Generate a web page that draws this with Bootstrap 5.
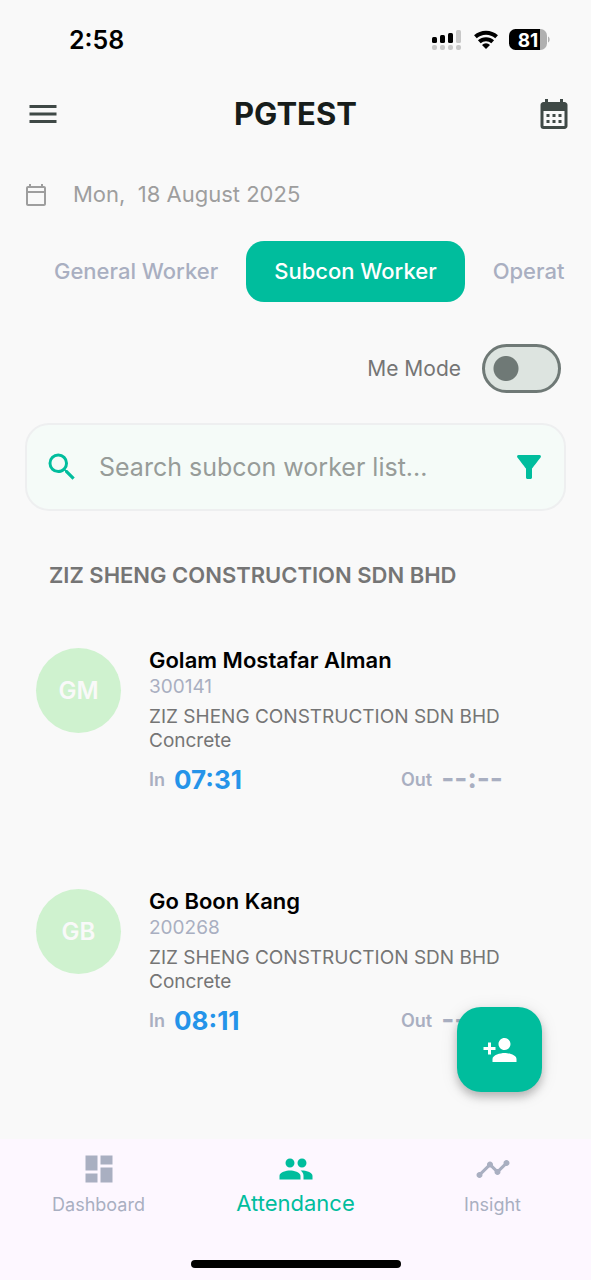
<!DOCTYPE html>
<html lang="en">
<head>
<meta charset="utf-8">
<meta name="viewport" content="width=device-width, initial-scale=1">
<title>PGTEST Attendance</title>
<link href="https://cdn.jsdelivr.net/npm/bootstrap@5.3.0/dist/css/bootstrap.min.css" rel="stylesheet">
<style>
  :root { --brand: #00bd9d; --muted: #a9afc1; --gray: #757575; }
  body { font-family: Inter, "Liberation Sans", sans-serif; background: #f9f9f9; color: #171d1b; }
  svg { display: block; fill: currentColor; flex: none; }
  .ico { width: 36px; height: 36px; }
  .plain { background: none; border: 0; padding: 0; color: #3f4946; }
  .status { height: 80px; padding: 0 40px 0 69px; color: #000; }
  .clock { font-size: 25px; font-weight: 600; line-height: 30px; }
  .topbar { height: 68px; padding: 0 19px; }
  .topbar .plain { width: 42px; }
  .topbar h1 { font-size: 31px; font-weight: 700; line-height: 36px; }
  .gutter { margin-left: 25px; margin-right: 25px; }
  .date { height: 93px; color: #9e9e9e; font-size: 22px; white-space: pre; }
  .tabs { flex-wrap: nowrap; overflow: hidden; height: 61px; padding-left: 1px; }
  .tabs .nav-link { font-size: 22px; font-weight: 500; line-height: 31px; padding: 15px 28px; color: var(--muted); border-radius: 18px; white-space: nowrap; }
  .tabs .nav-link:last-child { padding-right: 0; }
  .tabs .nav-link.active { background: var(--brand); color: #fff; }
  .me { margin-top: 42px; margin-right: 30px; gap: 21px; color: var(--gray); font-size: 21px; }
  .me .form-check-input { width: 79px; height: 49px; margin: 0; float: none; border: 3px solid #6f7976; border-radius: 25px; background: #dde4e0 radial-gradient(circle at 21px 50%, #6f7976 12px, transparent 13px); }
  .me .form-switch { padding: 0; min-height: 0; }
  .search { margin-top: 30px; height: 88px; padding: 0 17px; border: 2px solid #eeeff0; border-radius: 24px; background: #f5fbf8; color: var(--brand); }
  .search input { border: 0; background: none !important; box-shadow: none !important; font-size: 25px; line-height: 30px; padding: 0 18px 0 19px; }
  .search input::placeholder { color: #979c99; opacity: 1; }
  .search .plain { color: var(--brand); }
  .group { font-size: 22px; font-weight: 600; line-height: 30px; color: var(--gray); margin: 49px 25px 0 49px; }
  .person { margin: 0 36px 91px; gap: 28px; }
  .people { padding-top: 55px; }
  .avatar { width: 85px; height: 85px; margin-top: 3px; border-radius: 50%; background: #cff2cf; color: #f9f9f9; font-size: 24px; font-weight: 600; flex: none; }
  .person h3 { font-size: 22px; font-weight: 600; line-height: 30px; color: #000; margin: 0; }
  .pid { font-size: 19px; line-height: 24px; color: var(--muted); }
  .job { font-size: 19px; line-height: 24px; color: var(--gray); margin-top: 6px; }
  .times { margin-top: 12px; line-height: 30px; font-weight: 600; color: var(--muted); }
  .times small { font-size: 18px; }
  .times span { font-size: 26px; font-weight: 700; margin-left: 9px; }
  .times .in { color: #2594e9; }
  .times .out { width: 154px; flex: none; white-space: nowrap; }
  .times .out span { font-size: 28px; line-height: 26px; padding-bottom: 4px; }
  .bottombar { background: #fdf7ff; height: 141px; }
  .bottombar .nav-link { color: var(--muted); padding: 12px 0 0; font-size: 18px; line-height: 24px; gap: 6px; }
  .bottombar .nav-link.active { color: var(--brand); font-size: 22px; gap: 4px; }
  .home { width: 210px; height: 8px; border-radius: 4px; background: #000; margin-bottom: 12px; }
  .fab { position: absolute; right: 49px; bottom: 100%; width: 85px; height: 85px; margin-bottom: 47px; border: 0; border-radius: 24px; background: var(--brand); color: #fff; box-shadow: 0 5px 8px rgba(0,0,0,.22), 0 3px 18px rgba(0,0,0,.1); }
</style>
<script src="https://cdn.jsdelivr.net/npm/bootstrap@5.3.0/dist/js/bootstrap.bundle.min.js"></script>
</head>
<body>
<div class="d-flex flex-column min-vh-100">
  <div class="status d-flex align-items-center justify-content-between">
    <div class="clock">2:58</div>
    <div class="d-flex align-items-center gap-2">
      <svg width="34" height="24" viewBox="0 0 34 24" role="img" aria-label="Signal">
        <rect x="0" y="9" width="5" height="6" rx="1.500"/><rect x="8" y="7" width="5" height="8" rx="1.500"/><rect x="16" y="5" width="5" height="10" rx="1.500"/>
        <g fill="#c8c8c8"><rect x="24" y="2" width="5" height="13" rx="1.500"/><rect x="0" y="17" width="5" height="5" rx="2"/><rect x="8" y="17" width="5" height="5" rx="2"/><rect x="16" y="17" width="5" height="5" rx="2"/><rect x="24" y="17" width="5" height="5" rx="2"/></g>
      </svg>
      <svg width="26" height="20" viewBox="1 0 26 20" role="img" aria-label="Wi-Fi">
        <g fill="none" stroke="#000" stroke-width="4"><path d="M2.400 6.800a15.800 15.800 0 0 1 21.200 0"/><path d="M6.300 11.800a9.800 9.800 0 0 1 13.400 0"/></g>
        <path d="M13 19l-4-4a5.700 5.700 0 0 1 8 0z"/>
      </svg>
      <svg width="43" height="22" viewBox="0 0 43 22" role="img" aria-label="Battery 81 percent">
        <defs><clipPath id="cell"><rect x="1" y="0" width="38" height="21" rx="6.500"/></clipPath></defs>
        <g clip-path="url(#cell)"><rect width="32" height="22"/><rect x="32" width="8" height="22" fill="#b0b0b0"/></g>
        <path d="M40 7.500c2.200.8 2.200 5.200 0 6z" fill="#b0b0b0"/>
        <text x="20" y="17.500" text-anchor="middle" fill="#fff" font-size="19" font-weight="700">81</text>
      </svg>
    </div>
  </div>

  <header class="topbar d-flex align-items-center justify-content-between">
    <button class="plain" type="button" aria-label="Menu"><svg class="ico ms-auto" viewBox="0 0 24 24"><path d="M3 18h18v-2H3v2zm0-5h18v-2H3v2zm0-7v2h18V6H3z"/></svg></button>
    <h1 class="mb-0">PGTEST</h1>
    <button class="plain" type="button" aria-label="Calendar"><svg class="ico ms-auto" viewBox="0 0 24 24"><path d="M19 4h-1V2h-2v2H8V2H6v2H5c-1.110 0-1.990.9-1.990 2L3 20a2 2 0 0 0 2 2h14c1.100 0 2-.9 2-2V6c0-1.100-.9-2-2-2zm0 16H5V10h14v10zM9 14H7v-2h2v2zm4 0h-2v-2h2v2zm4 0h-2v-2h2v2zm-8 4H7v-2h2v2zm4 0h-2v-2h2v2zm4 0h-2v-2h2v2z"/></svg></button>
  </header>

  <main class="flex-grow-1">
    <div class="date gutter d-flex align-items-center"><svg class="me-4" width="24" height="24" viewBox="1 0 24 24"><path d="M20 3h-1V1h-2v2H7V1H5v2H4c-1.100 0-2 .9-2 2v16c0 1.100.9 2 2 2h16c1.100 0 2-.9 2-2V5c0-1.100-.9-2-2-2zm0 18H4V10h16v11zm0-13H4V5h16v3z"/></svg><span>Mon,  18 August 2025</span></div>

    <nav class="tabs nav nav-pills gutter">
      <a class="nav-link" href="#general">General Worker</a>
      <a class="nav-link active" href="#subcon" aria-current="page">Subcon Worker</a>
      <a class="nav-link" href="#operator">Operat</a>
    </nav>

    <div class="me d-flex align-items-center justify-content-end">
      <label for="meMode">Me Mode</label>
      <div class="form-switch d-flex"><input class="form-check-input" type="checkbox" role="switch" id="meMode"></div>
    </div>

    <form class="search gutter d-flex align-items-center">
      <svg class="ico" viewBox="0 0 24 24"><path d="M15.500 14h-.79l-.28-.27A6.471 6.471 0 0 0 16 9.500 6.500 6.500 0 1 0 9.500 16c1.610 0 3.090-.59 4.230-1.570l.27.28v.79l5 4.990L20.490 19l-4.990-5zm-6 0C7.010 14 5 11.990 5 9.500S7.010 5 9.500 5 14 7.010 14 9.500 11.990 14 9.500 14z"/></svg>
      <input class="form-control" type="text" placeholder="Search subcon worker list..." aria-label="Search subcon worker list">
      <button class="plain" type="button" aria-label="Filter"><svg class="ico" viewBox="0 0 24 24"><path d="M4.250 5.610C6.270 8.200 10 13 10 13v6c0 .55.45 1 1 1h2c.55 0 1-.45 1-1v-6s3.720-4.800 5.740-7.390A.998.998 0 0 0 18.950 4H5.040c-.83 0-1.300.95-.79 1.610z"/></svg></button>
    </form>

    <section class="overflow-hidden">
      <h2 class="group">ZIZ SHENG CONSTRUCTION SDN BHD</h2>
      <div class="people">
        <article class="person d-flex">
          <div class="avatar d-flex align-items-center justify-content-center">GM</div>
          <div class="flex-grow-1">
            <h3>Golam Mostafar Alman</h3>
            <div class="pid">300141</div>
            <div class="job">ZIZ SHENG CONSTRUCTION SDN BHD<br>Concrete</div>
            <div class="times d-flex justify-content-between">
              <div class="d-flex align-items-center"><small>In</small><span class="in">07:31</span></div>
              <div class="out d-flex align-items-center"><small>Out</small><span>--:--</span></div>
            </div>
          </div>
        </article>
        <article class="person d-flex mb-0">
          <div class="avatar d-flex align-items-center justify-content-center">GB</div>
          <div class="flex-grow-1">
            <h3>Go Boon Kang</h3>
            <div class="pid">200268</div>
            <div class="job">ZIZ SHENG CONSTRUCTION SDN BHD<br>Concrete</div>
            <div class="times d-flex justify-content-between">
              <div class="d-flex align-items-center"><small>In</small><span class="in">08:11</span></div>
              <div class="out d-flex align-items-center"><small>Out</small><span>--:--</span></div>
            </div>
          </div>
        </article>
      </div>
    </section>
  </main>

  <footer class="bottombar sticky-bottom d-flex flex-column justify-content-between align-items-center">
    <button class="fab d-flex align-items-center justify-content-center" type="button" aria-label="Add worker"><svg class="ico" viewBox="0 0 24 24"><path d="M15 12c2.210 0 4-1.790 4-4s-1.790-4-4-4-4 1.790-4 4 1.790 4 4 4zm-9-2V7H4v3H1v2h3v3h2v-3h3v-2H6zm9 4c-2.670 0-8 1.340-8 4v2h16v-2c0-2.660-5.330-4-8-4z"/></svg></button>
    <nav class="nav nav-justified w-100">
      <a class="nav-link col d-flex flex-column align-items-center" href="#dashboard"><svg class="ico" viewBox="0 0 24 24"><path d="M3 13h8V3H3v10zm0 8h8v-6H3v6zm10 0h8V11h-8v10zm0-18v6h8V3h-8z"/></svg>Dashboard</a>
      <a class="nav-link active col d-flex flex-column align-items-center" href="#attendance" aria-current="page"><svg class="ico" viewBox="0 0 24 24"><path d="M16 11c1.660 0 2.990-1.340 2.990-3S17.660 5 16 5c-1.660 0-3 1.340-3 3s1.340 3 3 3zm-8 0c1.660 0 2.990-1.340 2.990-3S9.660 5 8 5C6.340 5 5 6.340 5 8s1.340 3 3 3zm0 2c-2.330 0-7 1.170-7 3.500V19h14v-2.500c0-2.330-4.670-3.500-7-3.500zm8 0c-.29 0-.62.02-.97.05 1.160.84 1.970 1.970 1.970 3.450V19h6v-2.500c0-2.330-4.670-3.500-7-3.500z"/></svg>Attendance</a>
      <a class="nav-link col d-flex flex-column align-items-center" href="#insight"><svg class="ico" viewBox="0 0 24 24"><path d="M23 8c0 1.100-.9 2-2 2-.18 0-.35-.02-.51-.07l-3.560 3.550c.05.16.07.34.07.52 0 1.100-.9 2-2 2s-2-.9-2-2c0-.18.02-.36.07-.52l-2.550-2.550c-.16.05-.34.07-.52.07s-.36-.02-.52-.07l-4.550 4.560c.05.16.07.33.07.51 0 1.100-.9 2-2 2s-2-.9-2-2 .9-2 2-2c.18 0 .35.02.51.07l4.560-4.550C8.020 9.360 8 9.180 8 9c0-1.100.9-2 2-2s2 .9 2 2c0 .18-.02.36-.07.52l2.550 2.550c.16-.05.34-.07.52-.07s.36.02.52.07l3.550-3.560C19.020 8.350 19 8.180 19 8c0-1.100.9-2 2-2s2 .9 2 2z"/></svg>Insight</a>
    </nav>
    <div class="home"></div>
  </footer>
</div>
</body>
</html>
